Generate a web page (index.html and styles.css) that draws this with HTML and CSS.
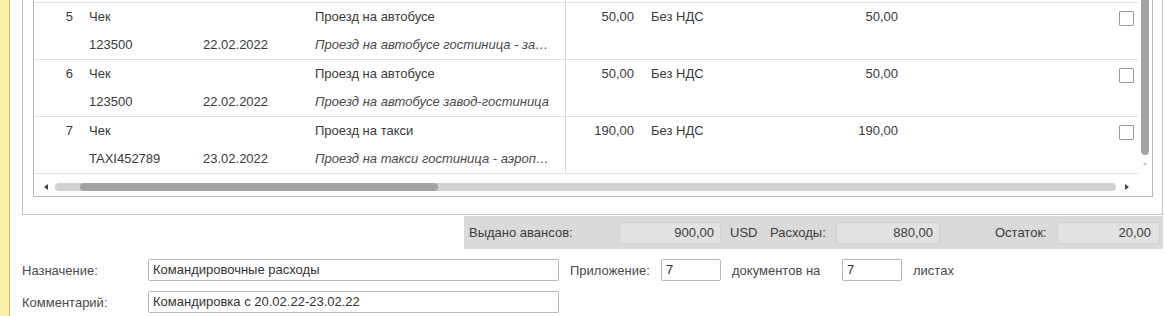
FILE: index.html
```html
<!DOCTYPE html>
<html lang="ru">
<head>
<meta charset="utf-8">
<title>Авансовый отчет</title>
<link rel="stylesheet" href="styles.css">
</head>
<body>
<div class="page">
  <div class="side"></div>
  <div class="main">
    <div class="group">
      <div class="grid-box">
        <div class="grid-body">
          <div class="rows">
            <div class="row stub"><div class="c c1"></div><div class="c c2"></div><div class="c c3"></div><div class="c c4"></div></div>
            <div class="row">
              <div class="c c1 num">5</div><div class="c c2">Чек</div><div class="c c3"></div><div class="c c4">Проезд на автобусе</div><div class="c c5 amt">50,00</div><div class="c c6">Без НДС</div><div class="c c7 amt">50,00</div><div class="c c8"><span class="chk"></span></div>
              <div class="c c1"></div><div class="c c2">123500</div><div class="c c3">22.02.2022</div><div class="c c4 it">Проезд на автобусе гостиница - за…</div><div class="c c5"></div><div class="c c6"></div><div class="c c7"></div><div class="c c8"></div>
            </div>
            <div class="row">
              <div class="c c1 num">6</div><div class="c c2">Чек</div><div class="c c3"></div><div class="c c4">Проезд на автобусе</div><div class="c c5 amt">50,00</div><div class="c c6">Без НДС</div><div class="c c7 amt">50,00</div><div class="c c8"><span class="chk"></span></div>
              <div class="c c1"></div><div class="c c2">123500</div><div class="c c3">22.02.2022</div><div class="c c4 it">Проезд на автобусе завод-гостиница</div><div class="c c5"></div><div class="c c6"></div><div class="c c7"></div><div class="c c8"></div>
            </div>
            <div class="row last">
              <div class="c c1 num">7</div><div class="c c2">Чек</div><div class="c c3"></div><div class="c c4">Проезд на такси</div><div class="c c5 amt">190,00</div><div class="c c6">Без НДС</div><div class="c c7 amt">190,00</div><div class="c c8"><span class="chk"></span></div>
              <div class="c c1"></div><div class="c c2">TAXI452789</div><div class="c c3">23.02.2022</div><div class="c c4 it">Проезд на такси гостиница - аэроп…</div><div class="c c5"></div><div class="c c6"></div><div class="c c7"></div><div class="c c8"></div>
            </div>
          </div>
          <div class="vscroll">
            <div class="vthumb"></div>
            <div class="varrow"></div>
          </div>
        </div>
        <div class="hscroll">
          <span class="harrow left"></span>
          <div class="htrack"><div class="hthumb"></div></div>
          <span class="harrow right"></span>
        </div>
      </div>
    </div>

    <div class="summary">
      <span class="s-label s-issued">Выдано авансов:</span>
      <span class="s-field s-f1">900,00</span>
      <span class="s-cur">USD</span>
      <span class="s-label s-exp">Расходы:</span>
      <span class="s-field s-f2">880,00</span>
      <span class="s-label s-rest">Остаток:</span>
      <span class="s-field s-f3">20,00</span>
    </div>

    <div class="form">
      <div class="f-row">
        <span class="f-label">Назначение:</span>
        <span class="f-input f-wide">Командировочные расходы</span>
        <span class="f-text f-app">Приложение:</span>
        <span class="f-input f-small">7</span>
        <span class="f-text f-docs">документов на</span>
        <span class="f-input f-small">7</span>
        <span class="f-text f-sheets">листах</span>
      </div>
      <div class="f-row">
        <span class="f-label">Комментарий:</span>
        <span class="f-input f-wide">Командировка с 20.02.22-23.02.22</span>
      </div>
    </div>
  </div>
</div>
</body>
</html>
```

FILE: styles.css
```css
* { box-sizing: border-box; }

html, body {
  margin: 0;
  padding: 0;
  background: #ffffff;
}

body {
  font-family: "Liberation Sans", Arial, sans-serif;
  font-size: 13px;
  color: #3a3a3a;
  width: 1165px;
  height: 316px;
  overflow: hidden;
}

.page {
  display: flex;
  height: 316px;
}

.side {
  width: 10px;
  flex: none;
  background: #fcefa6;
  border-right: 1px solid #cdbc6e;
}

.main {
  flex: 1;
  padding-left: 12px;
  padding-right: 2px;
}

/* group box */
.group {
  border: 1px solid #c4c4c4;
  border-top: none;
  padding: 0 9px 17px 10px;
}

.grid-box {
  border: 1px solid #b9b9b9;
  border-top: none;
  background: #fff;
}

.grid-body {
  display: flex;
}

.rows {
  flex: 1;
}

.row {
  display: grid;
  grid-template-columns: 48px 114px 112px 258px 76px 138px 126px 1fr;
  grid-template-rows: 28px 28px;
  border-top: 1px solid #e2e2e2;
}

.row.last {
  border-bottom: 1px solid #e2e2e2;
}

.row.stub {
  grid-template-rows: 2px;
  border-top: none;
}

.c {
  line-height: 28px;
  white-space: nowrap;
  overflow: hidden;
  padding-left: 7px;
}

.c4 {
  border-right: 1px solid #d6d6d6;
  padding-right: 4px;
}

.num {
  text-align: right;
  padding-right: 9px;
}

.amt {
  text-align: right;
  padding-right: 8px;
}

.c6 { padding-left: 9px; }

.it {
  font-style: italic;
  color: #4a4a4a;
}

.c8 {
  display: flex;
  justify-content: flex-end;
  align-items: center;
  padding-right: 4px;
}

.chk {
  width: 15px;
  height: 15px;
  border: 1px solid #9a9a9a;
  border-radius: 1px;
  background: #fff;
  margin-top: 2px;
}

/* vertical scroll */
.vscroll {
  width: 14px;
  flex: none;
  display: flex;
  flex-direction: column;
  align-items: flex-start;
}

.vthumb {
  width: 8px;
  height: 155px;
  margin-left: 3px;
  background: #a3a3a3;
  border-radius: 0 0 4px 4px;
}

.varrow {
  margin-top: 8px;
  margin-left: 5px;
  width: 0;
  height: 0;
  border-left: 2.5px solid transparent;
  border-right: 2.5px solid transparent;
  border-top: 3px solid #c4c4c4;
}

/* horizontal scroll */
.hscroll {
  height: 22px;
  display: flex;
  align-items: flex-start;
  padding-top: 9px;
  padding-left: 10px;
}

.harrow {
  width: 0;
  height: 0;
  border-top: 3px solid transparent;
  border-bottom: 3px solid transparent;
  margin-top: 1px;
}

.harrow.left {
  border-right: 4px solid #444;
  margin-right: 7px;
}

.harrow.right {
  border-left: 4px solid #444;
  margin-left: 9px;
}

.htrack {
  width: 1061px;
  height: 8px;
  background: #d1d1d1;
  border-radius: 4px;
}

.hthumb {
  margin-left: 25px;
  width: 358px;
  height: 8px;
  background: #a3a3a3;
  border-radius: 4px;
}

/* summary bar */
.summary {
  margin-top: 1px;
  margin-left: 442px;
  height: 33px;
  background: #dadada;
  display: flex;
  align-items: center;
  color: #3c3c3c;
}

.s-label { white-space: nowrap; }
.s-issued { margin-left: 5px; width: 150px; }
.s-exp { width: 66px; }
.s-rest { margin-left: 55px; width: 62px; }

.s-field {
  height: 22px;
  line-height: 20px;
  background: #e2e2e2;
  border: 1px solid #d2d2d2;
  border-radius: 2px;
  text-align: right;
  padding-right: 6px;
  color: #404040;
}

.s-f1 { width: 102px; }
.s-f2 { width: 104px; }
.s-f3 { width: 103px; padding-right: 8px; }

.s-cur { margin-left: 9px; width: 40px; }

/* form */
.form {
  margin-top: 10px;
  display: flex;
  flex-direction: column;
  gap: 10px;
}

.f-row {
  display: flex;
  align-items: center;
  height: 22px;
}

.f-label {
  width: 126px;
  color: #4a4a4a;
}

.f-text {
  color: #4a4a4a;
  white-space: nowrap;
}

.f-input {
  height: 22px;
  line-height: 20px;
  border: 1px solid #b7b7b7;
  border-radius: 2px;
  background: #fff;
  padding-left: 4px;
  color: #333;
  white-space: nowrap;
}

.f-wide { width: 411px; }
.f-small { width: 60px; }

.f-app { margin-left: 11px; width: 91px; }
.f-docs { margin-left: 11px; width: 110px; }
.f-sheets { margin-left: 11px; }
```
